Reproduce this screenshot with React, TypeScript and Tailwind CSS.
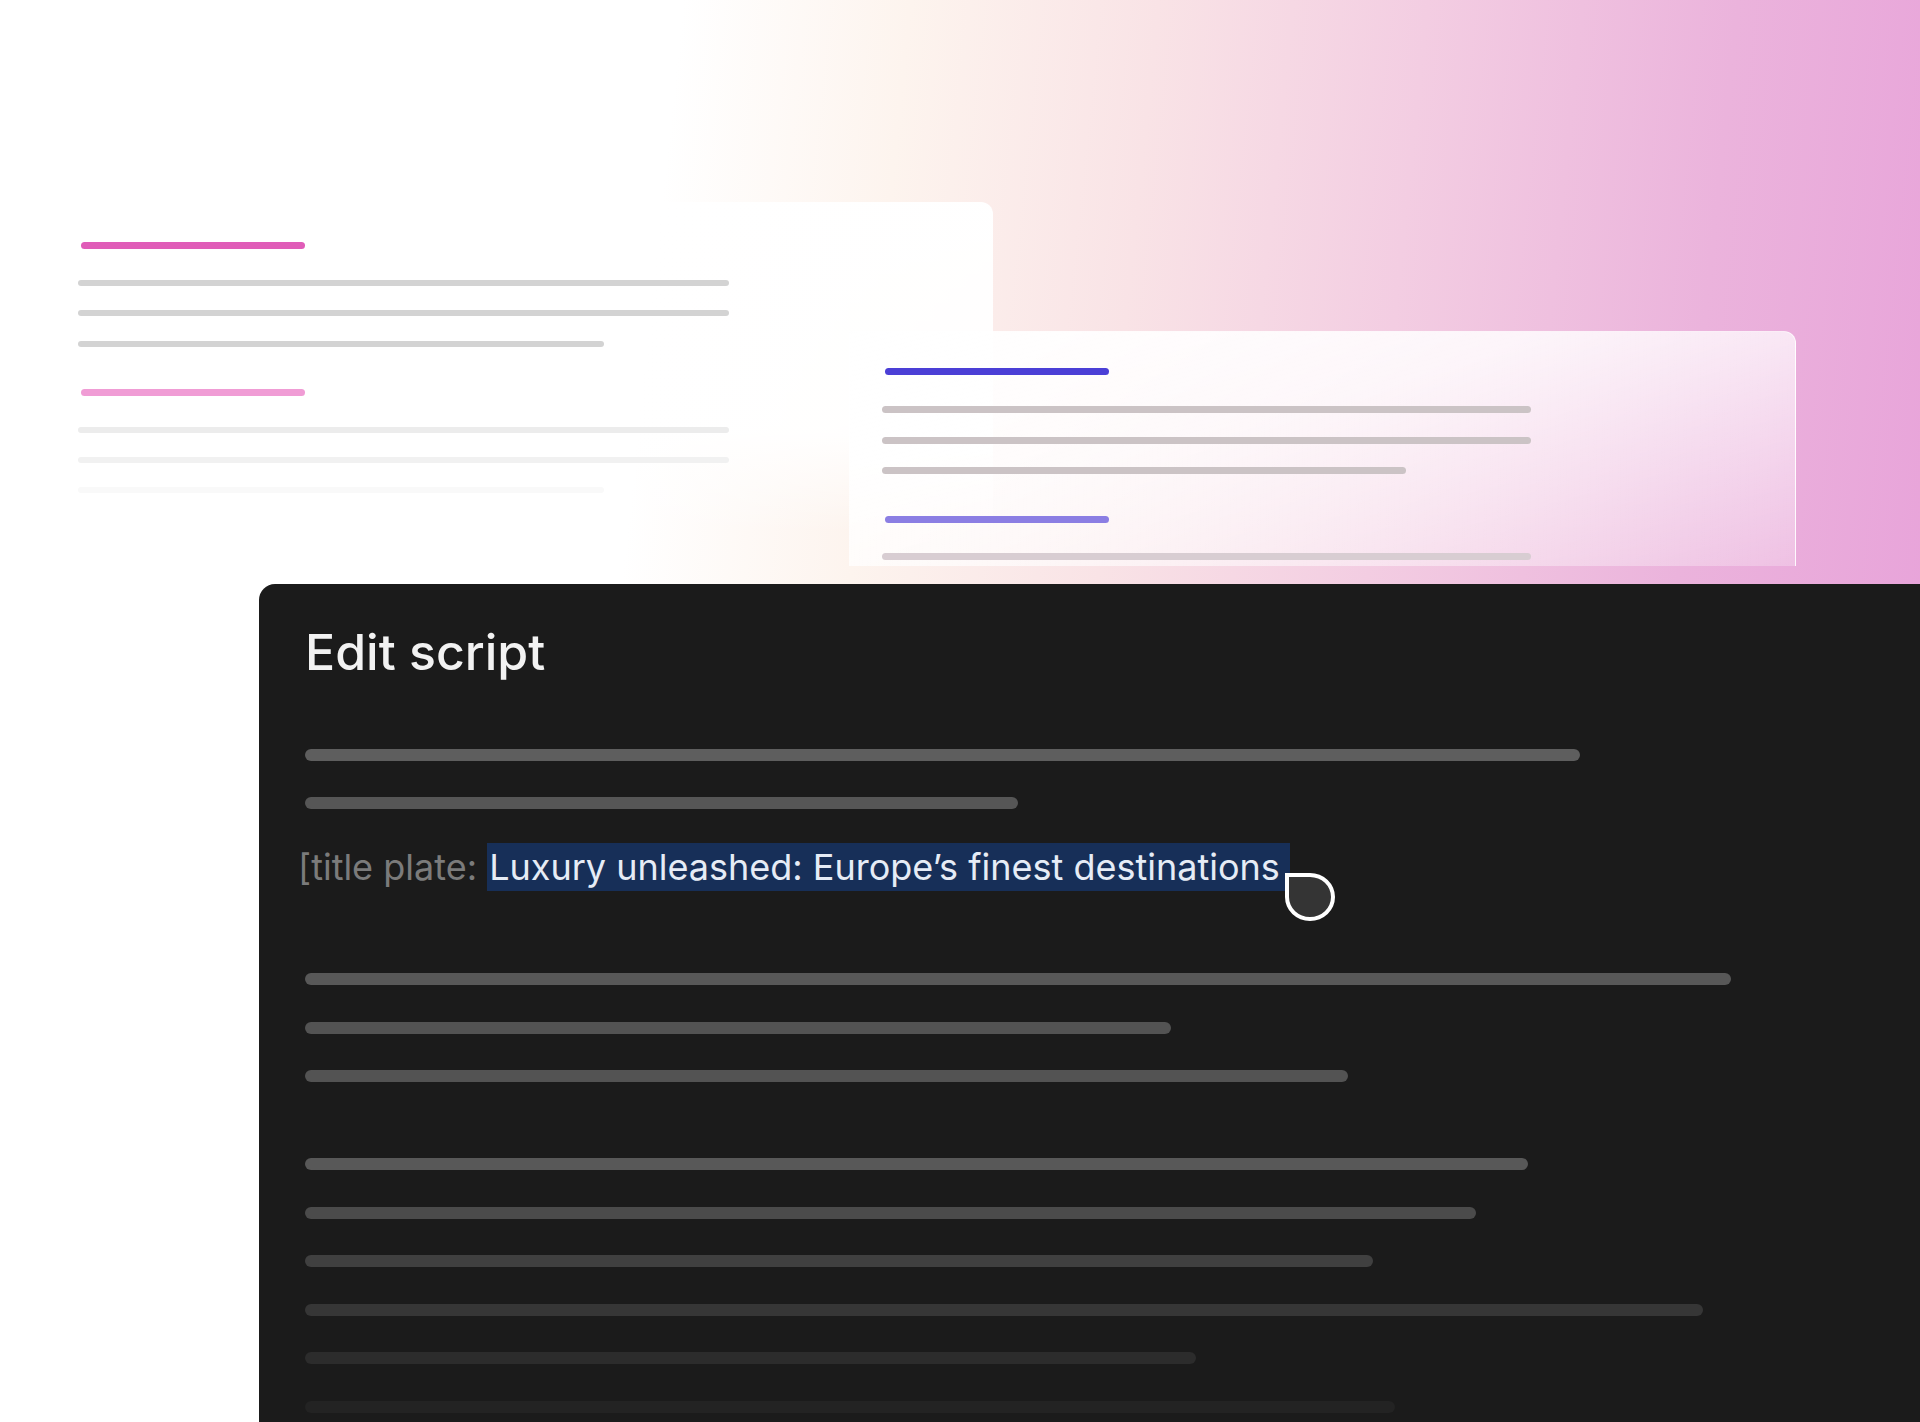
import React from "react";

const Bar = ({ w, c, mt, h = "h-[12px]" }: { w: string; c: string; mt?: string; h?: string }) => (
  <div className={`${h} rounded-full ${w} ${c} ${mt ?? ""}`} />
);

export default function App() {
  return (
    <div className="w-[1920px] h-[1422px] overflow-hidden font-['Inter',sans-serif] bg-[linear-gradient(96deg,#ffffff_0%,#ffffff_33%,#fdf4ee_44%,#f9e3e6_56%,#f3cde2_69%,#ebb3dc_84%,#e79fd9_100%)]">
      {/* top area with overlapping cards */}
      <div className="grid h-[584px]">
        {/* left card */}
        <div className="[grid-area:1/1] self-start justify-self-start ml-[45px] mt-[202px] w-[948px] h-[330px] rounded-tr-[12px] bg-[linear-gradient(180deg,rgba(255,255,255,0.98)_0%,rgba(255,255,255,0.95)_70%,rgba(255,255,255,0)_100%)] pl-[33px] pt-[40px] flex flex-col">
          <div className="ml-[3px] h-[7px] w-[224px] rounded-full bg-[#e05cb8]" />
          <div className="h-[6px] w-[651px] rounded-full bg-[#d3d3d3] mt-[31px]" />
          <div className="h-[6px] w-[651px] rounded-full bg-[#d3d3d3] mt-[24px]" />
          <div className="h-[6px] w-[526px] rounded-full bg-[#d3d3d3] mt-[25px]" />
          <div className="ml-[3px] h-[7px] w-[224px] rounded-full bg-[#f09cd5] mt-[42px]" />
          <div className="h-[6px] w-[651px] rounded-full bg-[#ececec] mt-[31px]" />
          <div className="h-[6px] w-[651px] rounded-full bg-[#f1f1f1] mt-[24px]" />
          <div className="h-[6px] w-[526px] rounded-full bg-[#f9f9f9] mt-[24px]" />
        </div>
        {/* right card */}
        <div className="[grid-area:1/1] self-start justify-self-start ml-[849px] mt-[331px] w-[947px] h-[235px] rounded-tr-[12px] border border-b-0 border-[rgba(255,255,255,0.7)] bg-[linear-gradient(165deg,rgba(255,255,255,0.98)_0%,rgba(255,255,255,0.82)_40%,rgba(255,255,255,0.25)_100%)] pl-[32px] pt-[36px] flex flex-col">
          <div className="ml-[3px] h-[7px] w-[224px] rounded-full bg-[#4b3fd6]" />
          <div className="h-[7px] w-[649px] rounded-full bg-[#cbc3c5] mt-[31px]" />
          <div className="h-[7px] w-[649px] rounded-full bg-[#cbc3c5] mt-[24px]" />
          <div className="h-[7px] w-[524px] rounded-full bg-[#cbc3c5] mt-[23px]" />
          <div className="ml-[3px] h-[7px] w-[224px] rounded-full bg-[#8b7ee3] mt-[42px]" />
          <div className="h-[7px] w-[649px] rounded-full bg-[#d8cdd2] mt-[30px]" />
        </div>
      </div>

      {/* dark editor panel */}
      <div className="ml-[259px] h-[838px] rounded-tl-[16px] bg-[#1b1b1b] pl-[46px] pt-[44px]">
        <h1 className="text-[50px] leading-[48px] font-medium text-[#f2f2f2]">Edit script</h1>

        <div className="flex flex-col gap-[36px] mt-[73px]">
          <Bar w="w-[1275px]" c="bg-[#5e5e5e]" />
          <Bar w="w-[713px]" c="bg-[#565656]" />
        </div>

        <div className="mt-[34px] -ml-[7px] text-[36px] leading-[48px] whitespace-nowrap">
          <span className="text-[#7b7b7b]">[title plate: </span>
          <span className="relative inline-block bg-[#172f58] text-[#e6ecf6] pl-[2px] leading-[48px]">
            Luxury unleashed: Europe’s finest destinations&nbsp;
            <span className="absolute left-[calc(100%-5px)] top-[30px] w-[50px] h-[48px] border-[4px] border-white bg-[#343434] rounded-[0_50%_50%_50%]" />
          </span>
        </div>

        <div className="flex flex-col gap-[36.5px] mt-[82px]">
          <Bar w="w-[1426px]" c="bg-[#585858]" />
          <Bar w="w-[866px]" c="bg-[#535353]" />
          <Bar w="w-[1043px]" c="bg-[#535353]" />
        </div>

        <div className="flex flex-col gap-[36.5px] mt-[76px]">
          <Bar w="w-[1223px]" c="bg-[#585858]" />
          <Bar w="w-[1171px]" c="bg-[#4b4b4b]" />
          <Bar w="w-[1068px]" c="bg-[#404040]" />
          <Bar w="w-[1398px]" c="bg-[#363636]" />
          <Bar w="w-[891px]" c="bg-[#2c2c2c]" />
          <Bar w="w-[1090px]" c="bg-[#232323]" />
        </div>
      </div>
    </div>
  );
}
